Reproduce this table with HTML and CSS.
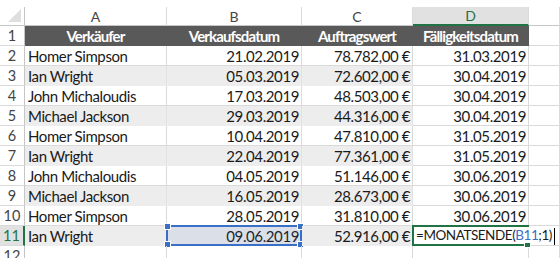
FILE: index.html
```html
<!DOCTYPE html>
<html>
<head>
<meta charset="utf-8">
<link rel="stylesheet" href="styles.css">
</head>
<body>
<div class="sheet">
  <div class="ch corner"><span class="tri"></span></div>
  <div class="ch">A</div>
  <div class="ch">B</div>
  <div class="ch">C</div>
  <div class="ch sel">D</div>
  <div class="ch"></div>

  <div class="rh">1</div>
  <div class="c hd">Verkäufer</div>
  <div class="c hd">Verkaufsdatum</div>
  <div class="c hd">Auftragswert</div>
  <div class="c hd">Fälligkeitsdatum</div>
  <div class="c"></div>

  <div class="rh">2</div>
  <div class="c">Homer Simpson</div>
  <div class="c r">21.02.2019</div>
  <div class="c r">78.782,00 €</div>
  <div class="c r">31.03.2019</div>
  <div class="c"></div>

  <div class="rh">3</div>
  <div class="c g">Ian Wright</div>
  <div class="c g r">05.03.2019</div>
  <div class="c g r">72.602,00 €</div>
  <div class="c r">30.04.2019</div>
  <div class="c"></div>

  <div class="rh">4</div>
  <div class="c">John Michaloudis</div>
  <div class="c r">17.03.2019</div>
  <div class="c r">48.503,00 €</div>
  <div class="c r">30.04.2019</div>
  <div class="c"></div>

  <div class="rh">5</div>
  <div class="c g">Michael Jackson</div>
  <div class="c g r">29.03.2019</div>
  <div class="c g r">44.316,00 €</div>
  <div class="c r">30.04.2019</div>
  <div class="c"></div>

  <div class="rh">6</div>
  <div class="c">Homer Simpson</div>
  <div class="c r">10.04.2019</div>
  <div class="c r">47.810,00 €</div>
  <div class="c r">31.05.2019</div>
  <div class="c"></div>

  <div class="rh">7</div>
  <div class="c g">Ian Wright</div>
  <div class="c g r">22.04.2019</div>
  <div class="c g r">77.361,00 €</div>
  <div class="c r">31.05.2019</div>
  <div class="c"></div>

  <div class="rh">8</div>
  <div class="c">John Michaloudis</div>
  <div class="c r">04.05.2019</div>
  <div class="c r">51.146,00 €</div>
  <div class="c r">30.06.2019</div>
  <div class="c"></div>

  <div class="rh">9</div>
  <div class="c g">Michael Jackson</div>
  <div class="c g r">16.05.2019</div>
  <div class="c g r">28.673,00 €</div>
  <div class="c r">30.06.2019</div>
  <div class="c"></div>

  <div class="rh">10</div>
  <div class="c">Homer Simpson</div>
  <div class="c r">28.05.2019</div>
  <div class="c r">31.810,00 €</div>
  <div class="c r">30.06.2019</div>
  <div class="c"></div>

  <div class="rh rsel">11</div>
  <div class="c g">Ian Wright</div>
  <div class="c g r ref">09.06.2019
    <span class="refbox"><i class="h tl"></i><i class="h bl"></i><i class="h tr"></i><i class="h br"></i></span>
  </div>
  <div class="c g r">52.916,00 €</div>
  <div class="c edit"><span class="editbox"><i class="fill"></i></span><span class="formula">=MONATSENDE(<span class="bref">B11</span>;1)<span class="caret"></span></span></div>
  <div class="c"></div>

  <div class="rh">12</div>
  <div class="c"></div>
  <div class="c"></div>
  <div class="c"></div>
  <div class="c"></div>
  <div class="c"></div>
</div>
</body>
</html>
```

FILE: styles.css
```css
html, body {
  margin: 0;
  padding: 0;
  background: #ffffff;
}
body {
  padding-top: 7px;
  overflow: hidden;
  font-family: "Lato", "Liberation Sans", sans-serif;
}
.sheet {
  display: grid;
  grid-template-columns: 25px 142px 135px 111px 116px 31px;
  grid-template-rows: 19px repeat(12, 20px);
  font-size: 15px;
  letter-spacing: -0.4px;
  color: #1a1a1a;
}
.ch {
  box-sizing: border-box;
  border-right: 1px solid #dadada;
  border-bottom: 1px solid #c6c6c6;
  color: #444;
  font-size: 14px;
  letter-spacing: 0;
  display: flex;
  align-items: center;
  justify-content: center;
  background: #ffffff;
}
.ch.corner {
  position: relative;
  border-right-color: #c6c6c6;
}
.tri {
  position: absolute;
  right: 3px;
  bottom: 3px;
  width: 0;
  height: 0;
  border-left: 13px solid transparent;
  border-bottom: 13px solid #dfdfdf;
}
.ch.sel {
  background: #e1e1e1;
  color: #217346;
  border-bottom: 2px solid #217346;
}
.rh {
  box-sizing: border-box;
  border-right: 1px solid #c6c6c6;
  border-bottom: 1px solid #dadada;
  color: #444;
  font-size: 14.5px;
  letter-spacing: 0;
  display: flex;
  align-items: flex-end;
  justify-content: center;
  padding-bottom: 1px;
}
.rh.rsel {
  background: #e1e1e1;
  color: #217346;
  border-right: 2px solid #217346;
}
.c {
  position: relative;
  box-sizing: border-box;
  border-right: 1px solid #dadada;
  border-bottom: 1px solid #dadada;
  padding: 0 3px 0 3px;
  display: flex;
  align-items: flex-end;
  white-space: nowrap;
}
.c.r {
  justify-content: flex-end;
  padding-right: 2px;
}
.c.g {
  background: #ededed;
  border-color: #ededed;
  border-right-color: #e2e2e2;
}
.c.hd {
  background: #595959;
  border-color: #595959;
  color: #ffffff;
  font-weight: bold;
  letter-spacing: -0.85px;
  justify-content: center;
}
.refbox {
  position: absolute;
  left: -1px;
  top: -1px;
  right: -1px;
  bottom: -1px;
  border: 2px solid #3a6fc8;
  background: rgba(60, 110, 200, 0.1);
  box-sizing: border-box;
}
.h {
  position: absolute;
  width: 5px;
  height: 5px;
  background: #3a6fc8;
  border: 1px solid #ffffff;
}
.h.tl { left: -4px; top: -4px; }
.h.bl { left: -4px; bottom: -4px; }
.h.tr { right: -4px; top: -4px; }
.h.br { right: -4px; bottom: -4px; }
.c.edit {
  z-index: 2;
  padding-left: 3px;
  border-right-color: transparent;
}
.editbox {
  position: absolute;
  left: -1px;
  top: -1px;
  right: -1px;
  bottom: -1px;
  border: 2px solid #217346;
  border-right: none;
  box-sizing: border-box;
}
.formula {
  position: relative;
  flex: none;
  background: #ffffff;
  font-size: 13.5px;
  letter-spacing: -0.45px;
  display: inline-flex;
  align-items: flex-end;
  margin-bottom: 2px;
}
.bref {
  color: #3a6fc8;
}
.caret {
  display: inline-block;
  width: 1px;
  height: 17px;
  background: #000;
  margin-left: 2px;
  margin-bottom: -2px;
}
.fill {
  position: absolute;
  right: -2px;
  bottom: -4px;
  width: 5px;
  height: 5px;
  background: #217346;
  border: 1px solid #ffffff;
}
```
